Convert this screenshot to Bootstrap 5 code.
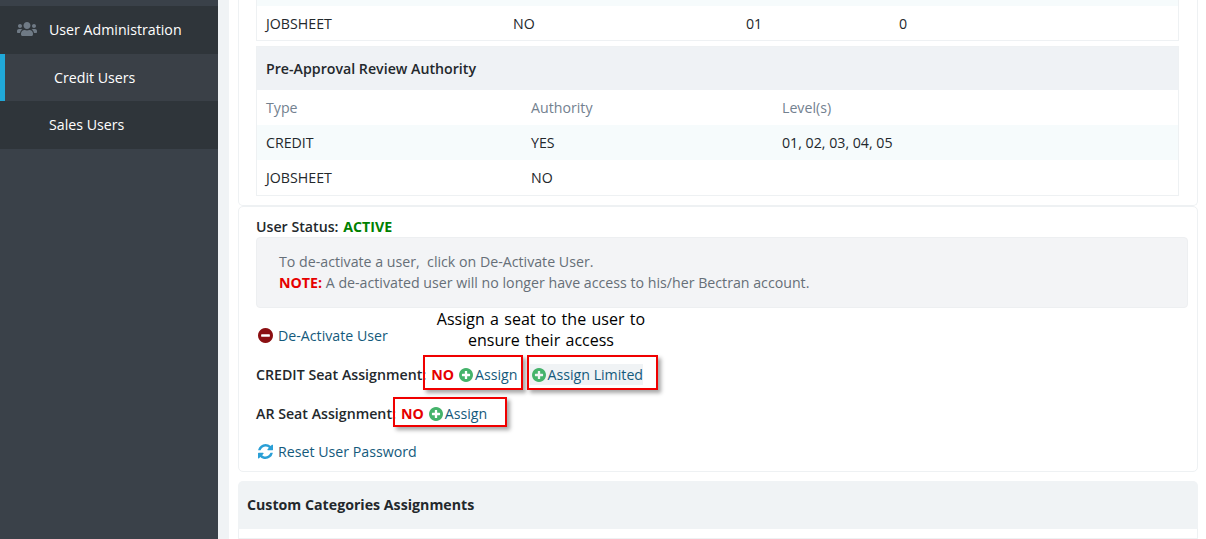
<!doctype html>
<html lang="en">
<head>
<meta charset="utf-8">
<title>Credit Users</title>
<link href="https://cdn.jsdelivr.net/npm/bootstrap@5.3.0/dist/css/bootstrap.min.css" rel="stylesheet">
<style>
html,body{height:539px;overflow:hidden}
body{font-family:"Open Sans","Noto Sans",sans-serif;font-size:14.2px;line-height:21px;color:#23282c;background:#fff}
.shell{height:539px}
.side{width:218px;background:#3a4149;padding-top:6px;color:#fff;flex:none}
.side-item{height:48px;background:#2f353a;color:#fff;display:flex;align-items:center;padding:0 0 2px 17px;text-decoration:none}
.side-item svg{width:20px;height:14px;margin-right:12px;flex:none}
.side-item.plain{padding-left:49px}
.side-item.sel{height:47px;background:#3a4047;border-left:5px solid #20a8d8;padding:0 0 0 49px}
.gutter{width:11px;background:#f0f3f5;flex:none}
.content{flex:1;padding:0 8px 0 9px;min-width:0}
.panel{border:1px solid #eef1f3;border-radius:5px;background:#fff}
.panel-top{border-top:0;border-top-left-radius:0;border-top-right-radius:0;height:206px;padding:0 18px 0 17px}
.stripe-tail{height:6px;background:#f6fbfc}
.grid-tbl{table-layout:fixed;width:100%;margin:0;border-collapse:separate;border-spacing:0}
.grid-tbl td{padding:0 0 0 9px;height:35px;vertical-align:middle;border:0;color:#23282c;background:transparent;box-shadow:none}
.tail-box{border:1px solid #eef1f3;border-top:0}
.tail-box td{height:34px}
.c1{width:247px}.c2{width:233px}.c3{width:153px}
.r1{width:265px}.r2{width:251px}
.auth-box{border:1px solid #eef1f3;margin-top:5px}
.auth-head{height:43px;background:#eff2f5;font-weight:600;display:flex;align-items:center;padding-left:9px}
.grid-tbl td.hd{color:#73818f}
.grid-tbl tr.alt td{background:#f6fbfc}
.panel-status{margin-top:0;height:266px;padding:9px 9px 0 17px;position:relative}
.st-line{font-weight:600;height:21px}
.good{color:#008000;font-weight:700;margin-left:1px}
.info-box{background:#f3f4f6;border:1px solid #edeff1;border-radius:4px;height:71px;margin-top:0;padding:13px 22px;color:#666f78;margin-right:0}
.bad{color:#e60000;font-weight:700}
.act{color:#145a7c;text-decoration:none}
.act-row{display:flex;align-items:center;height:21px}
.row-a{margin-top:17px;padding-left:1px}
.row-b{margin-top:18px;font-weight:600}
.row-c{margin-top:18px;font-weight:600}
.row-d{margin-top:17px;padding-left:1px}
.ico{width:15px;height:15px;flex:none;margin-left:1px}
.row-a .ico,.row-d .ico{margin-right:5px}
.row-b .bad,.row-c .bad{margin-left:5px}
.plus{width:14px;height:14px;margin-left:5px;margin-right:2px;flex:none}
.act-w{font-weight:400;display:inline-flex;align-items:center}
.lim{background:#f0f3f5;margin-left:13px;height:21px;padding-right:0}
.lim .plus{margin-left:2px;margin-right:1px}
.mark-box{position:absolute;border:2px solid #f00000;box-shadow:3px 3px 4px rgba(0,0,0,.35);pointer-events:none}
.m1{left:184px;top:148px;width:100px;height:35px}
.m2{left:288px;top:148px;width:131px;height:35px}
.m3{left:154px;top:190px;width:114px;height:30px}
.note-txt{position:absolute;left:172px;top:102px;width:260px;padding:0 22px;text-align:center;font-size:16px;word-spacing:1.2px;line-height:21px;color:#000}
.panel-cat{margin-top:9px;background:#fff;border:0;border-radius:5px 5px 0 0}
.cat-head{height:48px;background:#f0f3f5;font-weight:700;display:flex;align-items:center;padding:0 0 2px 9px;border-radius:5px 5px 0 0}
.cat-body{height:10px;border:1px solid #eef1f3;border-top:0;margin:0 0}
</style>
</head>
<body>
<div class="shell d-flex">
  <svg width="0" height="0" class="position-absolute" aria-hidden="true"><defs>
    <symbol id="plusc" viewBox="128 128 1536 1536"><path fill="#45b36b" d="M1344 960v-128q0-26-19-45t-45-19h-256v-256q0-26-19-45t-45-19h-128q-26 0-45 19t-19 45v256h-256q-26 0-45 19t-19 45v128q0 26 19 45t45 19h256v256q0 26 19 45t45 19h128q26 0 45-19t19-45v-256h256q26 0 45-19t19-45zm320-64q0 209-103 385.500t-279.500 279.500-385.500 103-385.500-103-279.500-279.500-103-385.500 103-385.500 279.500-279.500 385.500-103 385.500 103 279.500 279.500 103 385.500z"/></symbol>
  </defs></svg>
  <nav class="side">
    <a class="side-item" href="#">
      <svg viewBox="0 32 640 448" aria-hidden="true"><path fill="#6f7a85" d="M96 224c35.300 0 64-28.700 64-64s-28.700-64-64-64-64 28.700-64 64 28.700 64 64 64zm448 0c35.300 0 64-28.700 64-64s-28.700-64-64-64-64 28.700-64 64 28.700 64 64 64zm32 32h-64c-17.600 0-33.500 7.100-45.100 18.600 40.300 22.100 68.900 62 75.100 109.400h66c17.700 0 32-14.300 32-32v-32c0-35.300-28.700-64-64-64zm-256 0c61.900 0 112-50.100 112-112S381.900 32 320 32 208 82.100 208 144s50.100 112 112 112zm76.800 32h-8.300c-20.800 10-43.900 16-68.500 16s-47.600-6-68.500-16h-8.300C179.600 288 128 339.600 128 403.200V432c0 26.500 21.500 48 48 48h288c26.500 0 48-21.500 48-48v-28.800c0-63.600-51.600-115.200-115.200-115.200zm-223.700-13.400C161.500 263.100 145.600 256 128 256H64c-35.300 0-64 28.700-64 64v32c0 17.700 14.300 32 32 32h65.900c6.300-47.400 34.900-87.300 75.200-109.400z"/></svg>
      User Administration
    </a>
    <a class="side-item sel" href="#">Credit Users</a>
    <a class="side-item plain" href="#">Sales Users</a>
  </nav>
  <div class="gutter"></div>
  <main class="content">
    <section class="panel panel-top">
      <div class="tail-box">
        <div class="stripe-tail"></div>
        <table class="grid-tbl">
          <colgroup><col class="c1"><col class="c2"><col class="c3"><col></colgroup>
          <tr><td>JOBSHEET</td><td>NO</td><td>01</td><td>0</td></tr>
        </table>
      </div>
      <div class="auth-box">
        <div class="auth-head">Pre-Approval Review Authority</div>
        <table class="grid-tbl">
          <colgroup><col class="r1"><col class="r2"><col></colgroup>
          <tr><td class="hd">Type</td><td class="hd">Authority</td><td class="hd">Level(s)</td></tr>
          <tr class="alt"><td>CREDIT</td><td>YES</td><td>01, 02, 03, 04, 05</td></tr>
          <tr><td>JOBSHEET</td><td>NO</td><td></td></tr>
        </table>
      </div>
    </section>
    <section class="panel panel-status">
      <div class="st-line">User Status: <span class="good">ACTIVE</span></div>
      <div class="info-box">To de-activate a user,&nbsp; click on De-Activate User.<br><span class="bad">NOTE:</span> A de-activated user will no longer have access to his/her Bectran account.</div>
      <div class="act-row row-a">
        <svg class="ico" viewBox="128 128 1536 1536" aria-hidden="true"><path fill="#8b0f12" d="M1344 960v-128q0-26-19-45t-45-19h-768q-26 0-45 19t-19 45v128q0 26 19 45t45 19h768q26 0 45-19t19-45zm320-64q0 209-103 385.500t-279.500 279.500-385.500 103-385.500-103-279.500-279.500-103-385.500 103-385.500 279.500-279.500 385.500-103 385.500 103 279.500 279.500 103 385.500z"/></svg>
        <a class="act" href="#">De-Activate User</a>
      </div>
      <div class="act-row row-b">CREDIT Seat Assignment: <span class="bad">NO</span>
        <a class="act act-w" href="#"><svg class="plus" aria-hidden="true"><use href="#plusc"/></svg>Assign</a>
        <a class="act act-w lim" href="#"><svg class="plus" aria-hidden="true"><use href="#plusc"/></svg>Assign Limited</a>
      </div>
      <div class="act-row row-c">AR Seat Assignment: <span class="bad">NO</span>
        <a class="act act-w" href="#"><svg class="plus" aria-hidden="true"><use href="#plusc"/></svg>Assign</a>
      </div>
      <div class="act-row row-d">
        <svg class="ico" viewBox="128 128 1536 1536" aria-hidden="true"><path fill="#2a9fd6" d="M1639 1056q0 5-1 7-64 268-268 434.500t-478 166.500q-146 0-282.500-55t-243.500-157l-129 129q-19 19-45 19t-45-19-19-45v-448q0-26 19-45t45-19h448q26 0 45 19t19 45-19 45l-137 137q71 66 161 102t187 36q134 0 250-65t186-179q11-17 53-117 8-23 30-23h192q13 0 22.500 9.500t9.500 22.500zm25-800v448q0 26-19 45t-45 19h-448q-26 0-45-19t-19-45 19-45l138-138q-148-137-349-137-134 0-250 65t-186 179q-11 17-53 117-8 23-30 23h-199q-13 0-22.500-9.500t-9.500-22.500v-7q65-268 270-434.500t480-166.500q146 0 284 55.500t245 156.500l130-129q19-19 45-19t45 19 19 45z"/></svg>
        <a class="act" href="#">Reset User Password</a>
      </div>
      <div class="note-txt">Assign a seat to the user to ensure their access</div>
      <div class="mark-box m1"></div>
      <div class="mark-box m2"></div>
      <div class="mark-box m3"></div>
    </section>
    <section class="panel-cat">
      <div class="cat-head">Custom Categories Assignments</div>
      <div class="cat-body"></div>
    </section>
  </main>
</div>
<script src="https://cdn.jsdelivr.net/npm/bootstrap@5.3.0/dist/js/bootstrap.bundle.min.js"></script>
</body>
</html>
